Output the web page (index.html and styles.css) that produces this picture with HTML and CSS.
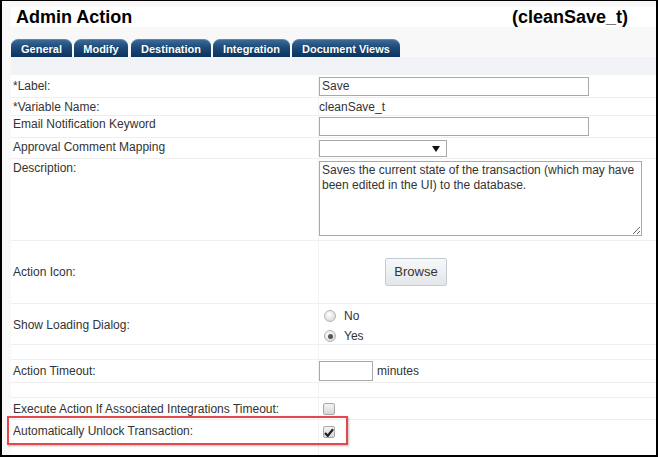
FILE: index.html
```html
<!DOCTYPE html>
<html>
<head>
<meta charset="utf-8">
<link rel="stylesheet" href="styles.css">
</head>
<body>
<div class="frame">
  <div class="header">
    <span class="title">Admin Action</span>
    <span class="title">(cleanSave_t)</span>
  </div>
  <div class="tabs">
    <span class="tab w61">General</span>
    <span class="tab w54">Modify</span>
    <span class="tab w80">Destination</span>
    <span class="tab w77">Integration</span>
    <span class="tab w108">Document Views</span>
  </div>
  <div class="panel">
    <div class="row h23">
      <div class="lbl">*Label:</div>
      <div class="val"><input class="txt wide" type="text" value="Save" readonly></div>
    </div>
    <div class="row h18">
      <div class="lbl">*Variable Name:</div>
      <div class="val">cleanSave_t</div>
    </div>
    <div class="row h22">
      <div class="lbl top1">Email Notification Keyword</div>
      <div class="val"><input class="txt wide" type="text" value="" readonly></div>
    </div>
    <div class="row h21">
      <div class="lbl top2">Approval Comment Mapping</div>
      <div class="val"><div class="select"><svg class="arrow" width="8" height="6" viewBox="0 0 8 6"><path d="M0 0 H8 L4 6 Z" fill="#111"/></svg></div></div>
    </div>
    <div class="row h82">
      <div class="lbl top2">Description:</div>
      <div class="val top2"><textarea class="area" readonly>Saves the current state of the transaction (which may have
been edited in the UI) to the database.</textarea></div>
    </div>
    <div class="row h63">
      <div class="lbl">Action Icon:</div>
      <div class="val"><span class="btn">Browse</span></div>
    </div>
    <div class="row h41">
      <div class="lbl">Show Loading Dialog:</div>
      <div class="val radios">
        <div class="opt"><span class="radio"></span>No</div>
        <div class="opt"><span class="radio on"></span>Yes</div>
      </div>
    </div>
    <div class="row h15">
      <div class="lbl"></div>
      <div class="val"></div>
    </div>
    <div class="row h23">
      <div class="lbl">Action Timeout:</div>
      <div class="val"><input class="txt short" type="text" value="" readonly><span class="unit">minutes</span></div>
    </div>
    <div class="row h15">
      <div class="lbl"></div>
      <div class="val"></div>
    </div>
    <div class="row h22">
      <div class="lbl">Execute Action If Associated Integrations Timeout:</div>
      <div class="val"><span class="check"></span></div>
    </div>
    <div class="row last">
      <div class="lbl top4">Automatically Unlock Transaction:</div>
      <div class="val top6"><span class="check"><svg width="10" height="9" viewBox="0 0 10 9"><path d="M1 5 L3.8 7.8 L9 1.2" fill="none" stroke="#222" stroke-width="2.2"/></svg></span></div>
    </div>
  </div>
  <div class="highlight"></div>
</div>
</body>
</html>
```

FILE: styles.css
```css
* { box-sizing: border-box; }
html, body { margin: 0; padding: 0; }
body { font-family: "Liberation Sans", Arial, sans-serif; }

.frame {
  width: 658px;
  height: 457px;
  border: solid #000;
  border-width: 1px 2px 2px 2px;
  background: #f8f8f8;
  padding-left: 9px;
  position: relative;
  overflow: hidden;
  display: flex;
  flex-direction: column;
}

.header {
  margin-top: 6px;
  height: 20px;
  background: #fff;
  display: flex;
  justify-content: space-between;
  align-items: center;
  padding: 0 28px 0 5px;
}
.title {
  font-weight: bold;
  font-size: 18px;
  line-height: 20px;
  color: #000;
}

.tabs {
  margin-top: 12px;
  height: 18px;
  display: flex;
  gap: 2px;
}
.tab {
  height: 18px;
  line-height: 18px;
  text-align: center;
  color: #fff;
  font-weight: bold;
  font-size: 11px;
  border-radius: 7px 7px 0 0;
  background: linear-gradient(#3a6a98 0%, #1d4a78 45%, #0b335f 100%);
  text-shadow: 0 0 1px #0a2a50;
  border-top: 1px solid #5f88b0;
}
.w61 { width: 61px; }
.w54 { width: 54px; margin-left: 0; }
.w80 { width: 80px; margin-left: 1px; }
.w77 { width: 77px; }
.w108 { width: 108px; }

.panel {
  flex: 1;
  background: #f2f3f7;
  padding-top: 18px;
  display: flex;
  flex-direction: column;
}

.row {
  display: grid;
  grid-template-columns: 307px 1fr;
  background: #fff;
  border-bottom: 1px solid #efefef;
  font-size: 12px;
  line-height: 14px;
  color: #333;
}
.h15 { height: 15px; }
.h18 { height: 18px; }
.h21 { height: 21px; }
.h22 { height: 22px; }
.h23 { height: 23px; }
.h41 { height: 41px; }
.h63 { height: 63px; }
.h82 { height: 82px; }
.last { flex: 1; border-bottom: none; }

.lbl {
  padding-left: 2px;
  display: flex;
  align-items: center;
}
.val {
  border-left: 1px solid #f3f3f3;
  display: flex;
  align-items: center;
}
.lbl.top1, .lbl.top2, .lbl.top4, .val.top2, .val.top6 { align-items: flex-start; }
.top1 { padding-top: 1px; }
.top2 { padding-top: 2px; }
.top4 { padding-top: 4px; }
.top6 { padding-top: 6px; }

.txt {
  height: 19px;
  border: 1px solid #a9a9a9;
  font-family: "Liberation Sans", Arial, sans-serif;
  font-size: 12px;
  color: #333;
  padding: 0 2px;
  margin: 0;
  background: #fff;
  outline: none;
}
.wide { width: 270px; }
.short { width: 54px; height: 20px; }
.unit { margin-left: 4px; }

.select {
  width: 128px;
  height: 17px;
  border: 1px solid #a9a9a9;
  background: #fff;
  position: relative;
}
.arrow { position: absolute; right: 6px; top: 5px; }

.area {
  width: 323px;
  height: 75px;
  border: 1px solid #a9a9a9;
  padding: 1px 2px;
  margin: 0;
  font-family: "Liberation Sans", Arial, sans-serif;
  font-size: 12px;
  line-height: 15px;
  color: #333;
  resize: both;
  overflow: hidden;
  outline: none;
  display: block;
}

.btn {
  margin-left: 66px;
  width: 62px;
  height: 28px;
  border: 1px solid #c3cbd3;
  border-radius: 2px;
  background: linear-gradient(#f7f8f9, #e3e6e9);
  font-size: 13px;
  color: #333;
  display: flex;
  align-items: center;
  justify-content: center;
}

.radios {
  flex-direction: column;
  align-items: flex-start;
  justify-content: flex-start;
  padding-top: 2px;
}
.opt {
  height: 20px;
  display: flex;
  align-items: center;
  gap: 8px;
  padding-left: 5px;
}
.radio {
  width: 12px;
  height: 12px;
  border-radius: 50%;
  border: 1px solid #b4b4b4;
  background: radial-gradient(circle at 40% 35%, #ffffff, #dcdcdc 75%);
  position: relative;
}
.radio.on::after {
  content: "";
  position: absolute;
  left: 2.5px;
  top: 2.5px;
  width: 5px;
  height: 5px;
  border-radius: 50%;
  background: #555;
}

.check {
  margin-left: 4px;
  width: 12px;
  height: 12px;
  border: 1px solid #a8a8a8;
  border-radius: 2px;
  background: linear-gradient(#f4f4f4, #d6d6d6);
  display: flex;
  align-items: center;
  justify-content: center;
}

.highlight {
  position: absolute;
  left: 5px;
  top: 415px;
  width: 341px;
  height: 29px;
  border: 2px solid #e4474c;
  box-shadow: 1px 1px 2px rgba(0,0,0,0.25);
}
```
